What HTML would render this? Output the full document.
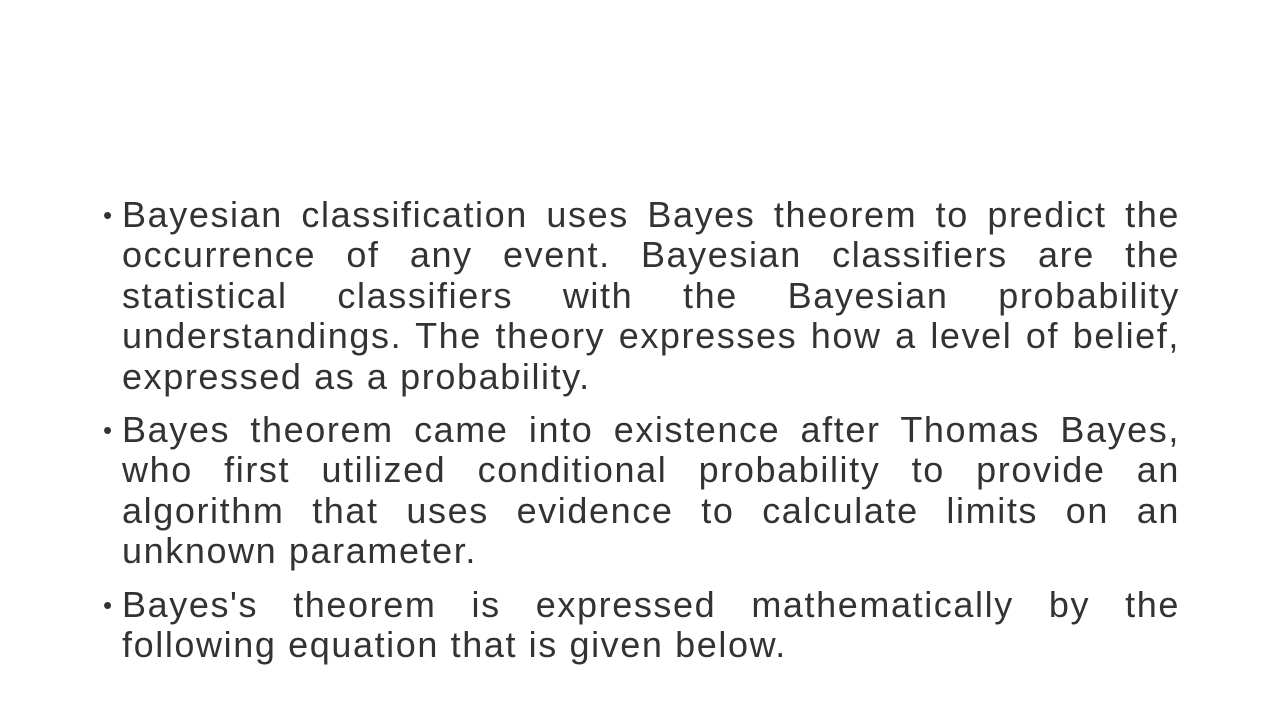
<!DOCTYPE html>
<html><head><meta charset="utf-8"><style>
html,body{margin:0;padding:0;background:#fff;}
body{width:1280px;height:720px;position:relative;overflow:hidden;font-family:"Liberation Sans",sans-serif;color:#333;font-size:36px;letter-spacing:1.6px;}
.l{position:absolute;left:122px;width:1058px;height:40px;line-height:40px;white-space:nowrap;}
.j{text-align:justify;text-align-last:justify;white-space:normal;}
.b{position:absolute;left:103px;height:40px;line-height:40px;font-size:26px;}
</style></head><body>
<div class="b" style="top:195px">•</div>
<div class="l j" style="top:195px">Bayesian classification uses Bayes theorem to predict the</div>
<div class="l j" style="top:235px">occurrence of any event. Bayesian classifiers are the</div>
<div class="l j" style="top:276px">statistical classifiers with the Bayesian probability</div>
<div class="l j" style="top:316px">understandings. The theory expresses how a level of belief,</div>
<div class="l" style="top:357px">expressed as a probability.</div>
<div class="b" style="top:410px">•</div>
<div class="l j" style="top:410px">Bayes theorem came into existence after Thomas Bayes,</div>
<div class="l j" style="top:450px">who first utilized conditional probability to provide an</div>
<div class="l j" style="top:491px">algorithm that uses evidence to calculate limits on an</div>
<div class="l" style="top:531px">unknown parameter.</div>
<div class="b" style="top:585px">•</div>
<div class="l j" style="top:585px">Bayes's theorem is expressed mathematically by the</div>
<div class="l" style="top:625px">following equation that is given below.</div>
</body></html>
